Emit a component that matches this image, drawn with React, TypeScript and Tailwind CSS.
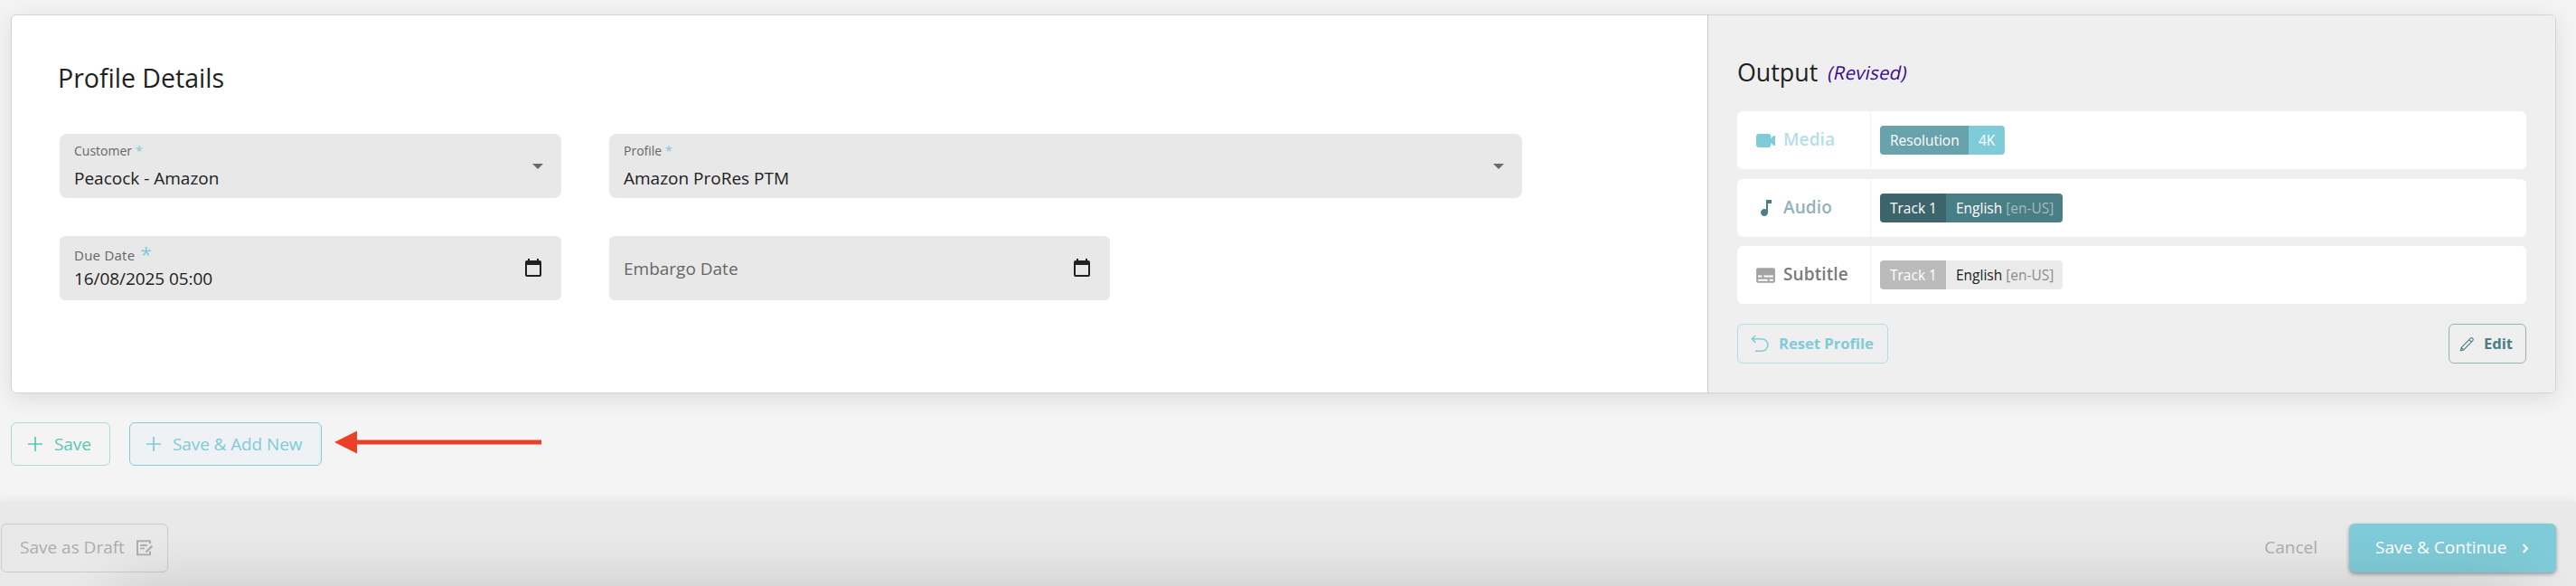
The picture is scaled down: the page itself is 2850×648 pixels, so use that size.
import type { ReactNode } from "react";
import { MdMusicNote, MdSubtitles } from "react-icons/md";

function VideoIcon() {
  return (
    <svg width="21" height="15" viewBox="0 0 21 15" fill="#80cbd8">
      <rect width="16.3" height="15" rx="3" />
      <path d="M16 5.6 18.6 2.4Q19.4 1.8 21 2V13Q19.4 13.2 18.6 12.6L16 9.4Z" />
    </svg>
  );
}

function UndoIcon() {
  return (
    <svg width="20" height="20" viewBox="0 0 20 20" fill="none" stroke="#80cbd8" strokeWidth="1.5">
      <path d="M5.2 1 1.2 4.8 5.2 8.6M1.2 4.8H12.2A6.75 6.75 0 0 1 12.2 18.3H5" />
    </svg>
  );
}

function PencilIcon() {
  return (
    <svg width="17" height="17" viewBox="0 0 17 17" fill="none" stroke="#4a7e86" strokeWidth="1.1" strokeLinejoin="round">
      <path d="M1.2 15.8 2.2 12.4 12.2 2.2Q13.4 .9 14.7 2.1 15.9 3.4 14.8 4.7L4.7 14.9ZM10.8 3.7 13.3 6.2M2.2 12.4 4.7 14.9" />
    </svg>
  );
}

function DraftIcon() {
  return (
    <svg width="19" height="18" viewBox="0 0 19 18" fill="none" stroke="#adadad" strokeWidth="1.9">
      <path d="M15 4.3V1.2H1V16.4H15V12.6" />
      <path d="M4.2 6H11.6M4.2 9.4H9" />
      <path d="M10.4 13.6 17.4 6.8" strokeWidth="2.1" />
    </svg>
  );
}

function CalendarIcon() {
  return (
    <svg className="-mt-px" width="18" height="20" viewBox="0 0 18 20" fill="#212121">
      <path
        fillRule="evenodd"
        d="M3 0H5V2H13V0H15V2H16A2 2 0 0 1 18 4V18A2 2 0 0 1 16 20H2A2 2 0 0 1 0 18V4A2 2 0 0 1 2 2H3ZM2 7V18H16V7Z"
      />
    </svg>
  );
}

function PlusIcon({ color }: { color: string }) {
  return (
    <svg width="16" height="16" viewBox="0 0 16 16" stroke={color} strokeWidth="1.7">
      <path d="M8 0V16M0 8H16" />
    </svg>
  );
}

function SelectField({ label, value, className }: { label: string; value: string; className: string }) {
  return (
    <div className={`flex h-[71px] items-start justify-between rounded-lg bg-[#e8e8e8] pl-4 ${className}`}>
      <div className="pt-[9px]">
        <div className="h-5 text-[14px] leading-5 text-[#666]">
          {label} <span className="text-[15px] leading-none text-[#80cbd8]">*</span>
        </div>
        <div className="mt-[7px] text-[19px] leading-[26px] text-[#212121]">{value}</div>
      </div>
      <svg className="mt-[33px] mr-5" width="12" height="6" viewBox="0 0 12 6" fill="#6a6a6a">
        <path d="M0 0H12L6 6Z" />
      </svg>
    </div>
  );
}

function OutputRow({ icon, label, color, children }: { icon: ReactNode; label: string; color: string; children: ReactNode }) {
  return (
    <div className="flex h-16 rounded-md bg-white">
      <div className="flex w-[148px] items-center border-r border-[#f2f2f2] pl-[18px]">
        <span className="flex w-[27px] justify-center">{icon}</span>
        <span className={`ml-1.5 pb-0.5 text-[19px] leading-6 font-semibold tracking-[0.1px] ${color}`}>{label}</span>
      </div>
      <div className="flex items-center pl-2.5">{children}</div>
    </div>
  );
}

function Chip({ name, nameClass, valueClass, children }: { name: string; nameClass: string; valueClass: string; children: ReactNode }) {
  return (
    <div className="flex h-8 overflow-hidden rounded text-[15.5px] leading-8 whitespace-nowrap">
      <span className={`pl-[11px] ${nameClass}`}>{name}</span>
      <span className={`pl-[11px] ${valueClass}`}>{children}</span>
    </div>
  );
}

export default function App() {
  return (
    <div className="relative flex h-[648px] w-[2850px] flex-col overflow-hidden bg-[#f4f4f4] font-['Open_Sans',sans-serif] text-[#212121]">
      <main className="h-[555px] pt-4 pl-3">
        <section className="flex h-[419px] w-[2816px] overflow-hidden rounded-md border border-[#d3d3d3] bg-white shadow-[0_5px_26px_rgba(0,0,0,0.10)]">
          <div className="w-[1877px] border-r border-[#c8c8c8] pt-[49px] pl-[53px]">
            <h1 className="-ml-0.5 text-[28.5px] leading-10">Profile Details</h1>
            <div className="mt-[42px] flex gap-[53px]">
              <SelectField label="Customer" value="Peacock - Amazon" className="w-[555px]" />
              <SelectField label="Profile" value="Amazon ProRes PTM" className="w-[1010px]" />
            </div>
            <div className="mt-[42px] flex gap-[53px]">
              <div className="flex h-[71px] w-[555px] items-center justify-between rounded-md bg-[#e8e8e8] pr-[22px] pl-4">
                <div>
                  <div className="flex h-5 gap-[6px] text-[15px] leading-5 text-[#666]">
                    <span className="tracking-[0.25px]">Due Date</span>
                    <span className="text-[22px] leading-4 text-[#80cbd8]">*</span>
                  </div>
                  <div className="mt-[3px] text-[19px] leading-[26px] tracking-[-0.08px]">16/08/2025 05:00</div>
                </div>
                <CalendarIcon />
              </div>
              <div className="flex h-[71px] w-[554px] items-center justify-between rounded-md bg-[#e8e8e8] pr-[22px] pl-4">
                <span className="text-[19px] leading-[26px] text-[#666]">Embargo Date</span>
                <CalendarIcon />
              </div>
            </div>
          </div>

          <div className="flex-1 bg-[#efefef] pt-[43px] pr-8 pl-8">
            <div className="flex h-10 items-center">
              <h2 className="text-[26.8px] leading-10">Output</h2>
              <span className="ml-3 -skew-x-12 text-[20.5px] leading-10 font-medium tracking-[0.2px] text-[#3b0a91]">(Revised)</span>
            </div>
            <div className="mt-[23px] flex flex-col gap-[10.5px]">
              <OutputRow icon={<VideoIcon />} label="Media" color="text-[#b3e0e8]">
                <Chip name="Resolution" nameClass="w-[98px] bg-[#68a2ad] text-white" valueClass="w-10 bg-[#80cbd8] text-white">
                  4K
                </Chip>
              </OutputRow>
              <OutputRow icon={<MdMusicNote size={24} color="#4a7e86" />} label="Audio" color="text-[#92b2b7]">
                <Chip name="Track 1" nameClass="w-[73px] bg-[#3b656b] text-white" valueClass="w-[129px] bg-[#4a7e86] text-white">
                  English <span className="text-[#a0bbbf]">[en-US]</span>
                </Chip>
              </OutputRow>
              <OutputRow icon={<MdSubtitles size={25} color="#a3a3a3" />} label="Subtitle" color="text-[#7a7a7a]">
                <Chip name="Track 1" nameClass="w-[73px] bg-[#bbb] text-white" valueClass="w-[129px] bg-[#ebebeb] text-[#212121]">
                  English <span className="text-[#8c8c8c]">[en-US]</span>
                </Chip>
              </OutputRow>
            </div>
            <div className="mt-[22px] flex h-11 justify-between text-[16.6px] font-bold">
              <button className="flex w-[167px] items-center rounded-md border border-[#b0dde5] pl-3.5 text-[#80cbd8]">
                <UndoIcon />
                <span className="ml-[11px] whitespace-nowrap">Reset Profile</span>
              </button>
              <button className="flex w-[86px] items-center rounded-md border border-[#92b2b7] pl-[11px] text-[#4a7e86]">
                <PencilIcon />
                <span className="ml-[10px]">Edit</span>
              </button>
            </div>
          </div>
        </section>

        <div className="mt-8 flex h-12 items-center text-[19px] font-medium">
          <button className="flex h-12 w-[110px] items-center rounded-md border border-[#a5ddd3] pl-[18px] text-[#57c7b6]">
            <PlusIcon color="#57c7b6" />
            <span className="ml-[13px] tracking-[-0.1px]">Save</span>
          </button>
          <button className="ml-[21px] flex h-12 w-[213px] items-center rounded-md border border-[#80cbd8] bg-[#eef2f4] pl-[18px] text-[#80cbd8]">
            <PlusIcon color="#80cbd8" />
            <span className="ml-[13px] tracking-[-0.1px] whitespace-nowrap">Save &amp; Add New</span>
          </button>
          <svg className="-mt-1 ml-[14px]" width="229" height="26" viewBox="0 0 229 26" fill="#ea4027">
            <path d="M0 13 25 .5V10.5H229V15.5H25V25.5Z" />
          </svg>
        </div>
      </main>

      <footer className="flex h-[93px] items-start bg-[#e9e9e9] pt-6 pl-px text-[19px] shadow-[0_0_10px_rgba(0,0,0,0.09)]">
        <button className="flex h-[54px] w-[185px] items-center rounded-md border border-[#cbcbcb] pl-5 text-[#adadad]">
          <span className="-mt-0.5 whitespace-nowrap">Save as Draft</span>
          <span className="ml-[13px]">
            <DraftIcon />
          </span>
        </button>
        <div className="ml-auto flex h-[54px] items-center pr-[22px]">
          <button className="mr-[35px] pb-0.5 text-[#adadad]">Cancel</button>
          <button className="flex h-[54px] w-[229px] items-center rounded-md bg-[#80cbd8] pl-[29px] font-medium text-white shadow-[0_2px_4px_rgba(0,0,0,0.35)]">
            <span className="pb-0.5 whitespace-nowrap">Save &amp; Continue</span>
            <svg className="ml-[17px]" width="8" height="11" viewBox="0 0 8 11" fill="none" stroke="#fff" strokeWidth="2">
              <path d="M1.5 1 6 5.5 1.5 10" />
            </svg>
          </button>
        </div>
      </footer>
      <div className="pointer-events-none absolute top-full right-[60px] left-[130px] h-[120px] shadow-[0_0_64px_rgba(0,0,0,0.15)]" />
    </div>
  );
}
